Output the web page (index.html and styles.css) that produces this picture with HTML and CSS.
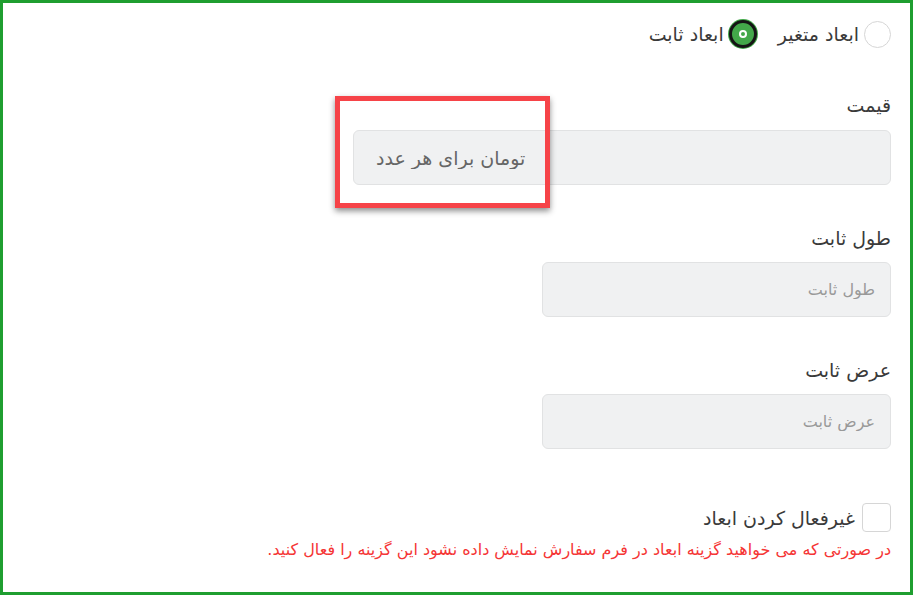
FILE: index.html
```html
<!DOCTYPE html>
<html lang="fa" dir="rtl">
<head>
    <meta charset="UTF-8">
    <meta name="viewport" content="width=device-width, initial-scale=1.0">
    <title>ابعاد محصول</title>
    <link rel="stylesheet" href="styles.css">
</head>
<body>

    <div class="frame">
        <div class="radios">
            <label class="radio">
                <span class="dot"></span>
                ابعاد متغیر
            </label>
            <label class="radio">
                <span class="dot checked"></span>
                ابعاد ثابت
            </label>
        </div>

        <div class="group price">
            <label class="title">قیمت</label>
            <input type="text" class="field wide" placeholder="تومان برای هر عدد">
            <div class="mark"></div>
        </div>

        <div class="group">
            <label class="title">طول ثابت</label>
            <input type="text" class="field" placeholder="طول ثابت">
        </div>

        <div class="group">
            <label class="title">عرض ثابت</label>
            <input type="text" class="field" placeholder="عرض ثابت">
        </div>

        <label class="check">
            <span class="box"></span>
            غیرفعال کردن ابعاد
        </label>
        <p class="note">در صورتی که می خواهید گزینه ابعاد در فرم سفارش نمایش داده نشود این گزینه را فعال کنید.</p>
    </div>

</body>
</html>
```

FILE: styles.css
```css
html, body {
    margin: 0;
    height: 100%;
}
body {
    font-family: "DejaVu Sans", sans-serif;
    color: #3a3a3a;
    background-color: white;
}
.frame {
    box-sizing: border-box;
    height: 595px;
    border: 3px solid #1f9e30;
    padding: 17px 19px 0 20px;
    position: relative;
}
.radios {
    display: flex;
    align-items: center;
    gap: 21px;
    font-size: 19px;
    line-height: 28px;
}
.radio {
    display: flex;
    align-items: center;
    gap: 5px;
}
.dot {
    width: 25px;
    height: 25px;
    border: 1px solid #d6d6d6;
    border-radius: 50%;
    display: flex;
    align-items: center;
    justify-content: center;
}
.dot.checked {
    width: 22px;
    height: 22px;
    border: 3px solid #151515;
    background-color: #43a84a;
    box-shadow: 0 0 0 1px #43a84a;
}
.dot.checked::after {
    content: "";
    width: 4px;
    height: 4px;
    border-radius: 50%;
    border: 2px solid white;
    background-color: #43a84a;
}
.group {
    display: flex;
    flex-direction: column;
    align-items: flex-start;
}
.title {
    font-size: 19px;
    line-height: 22px;
    margin-bottom: 13px;
}
.price {
    margin-top: 46px;
    position: relative;
}
.price .title {
    margin-bottom: 14px;
}
.group + .group {
    margin-top: 42px;
}
.field {
    box-sizing: border-box;
    width: 349px;
    height: 55px;
    border: 1px solid #e1e2e3;
    border-radius: 6px;
    background-color: #f0f1f2;
    padding: 0 15px;
    font-family: inherit;
    font-size: 16px;
}
.field::placeholder {
    color: #999;
}
.field.wide {
    width: 538px;
    text-align: left;
    padding-left: 22px;
    font-size: 19px;
}
.field.wide::placeholder {
    color: #666;
}
.mark {
    position: absolute;
    left: 312px;
    top: 2px;
    width: 205px;
    height: 102px;
    border: 5px solid #f64348;
    box-shadow: 0 3px 6px rgba(0, 0, 0, 0.45);
}
.check {
    display: flex;
    align-items: center;
    gap: 7px;
    margin-top: 54px;
    font-size: 19px;
}
.box {
    width: 27px;
    height: 27px;
    border: 1px solid #d6d6d6;
    border-radius: 4px;
}
.note {
    margin: 8px 0 0;
    font-size: 16px;
    color: #f53535;
}
```
